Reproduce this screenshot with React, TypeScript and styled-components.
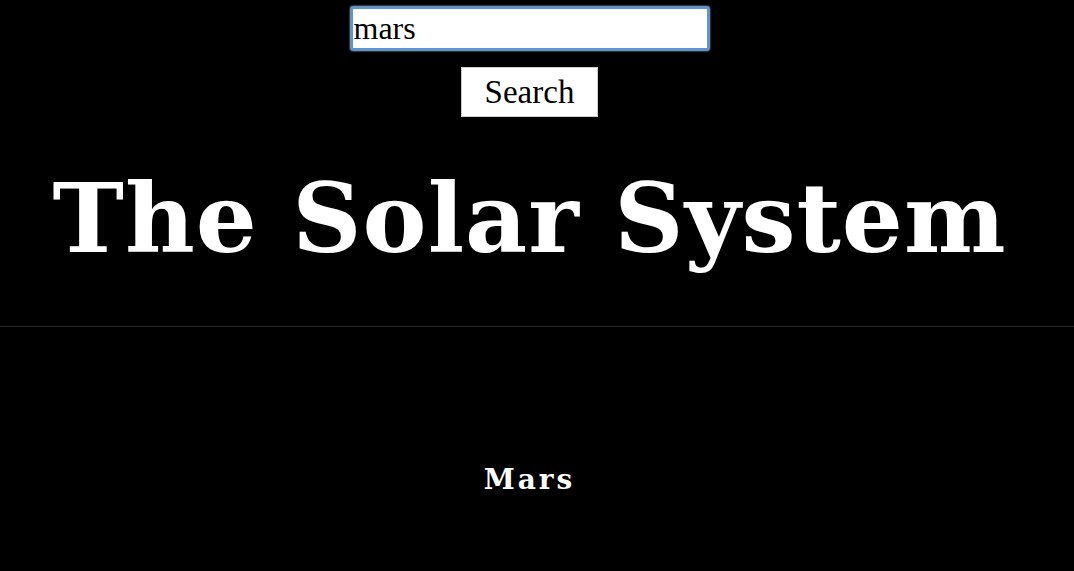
import React from "react";
import styled, { createGlobalStyle } from "styled-components";

const Global = createGlobalStyle`
  html, body { margin: 0; padding: 0; background: #000; }
  body { font-family: "Liberation Serif", serif; color: #fff; }
`;

const Page = styled.div`
  display: flex;
  flex-direction: column;
  align-items: stretch;
  min-height: 571px;
  padding-right: 15px;
  background: #000;
`;

const SearchForm = styled.form`
  display: flex;
  flex-direction: column;
  align-items: center;
  gap: 17px;
  padding-top: 7px;
`;

const SearchInput = styled.input`
  width: 358px;
  height: 43px;
  box-sizing: border-box;
  padding: 0 1px;
  font-family: "Liberation Serif", serif;
  font-size: 32px;
  color: #000;
  background: #fff;
  border: 2px solid #5b95d6;
  border-radius: 2px;
  box-shadow: 0 0 2px 1px #9cc3ec;
  outline: none;
  caret-color: #000;
`;

const SearchButton = styled.button`
  width: 137px;
  height: 50px;
  box-sizing: border-box;
  font-family: "Liberation Serif", serif;
  font-size: 33px;
  color: #000;
  background: #fff;
  border: 1px solid #ccc;
  border-radius: 0;
  padding: 0;
`;

const Title = styled.h1`
  margin: 22px 0 0;
  height: 187px;
  text-align: center;
  font-family: "DejaVu Serif", serif;
  font-weight: 900;
  font-size: 96px;
  line-height: 160px;
  letter-spacing: 1px;
  color: #fff;
`;

const Divider = styled.hr`
  margin: 0 -15px 0 0;
  border: 0;
  border-top: 1px solid #262626;
`;

const Result = styled.h2`
  margin: 136px 0 0;
  text-align: center;
  font-family: "DejaVu Serif", serif;
  font-weight: 900;
  font-size: 28px;
  letter-spacing: 3px;
  color: #fff;
`;

export default function App() {
  const [q, setQ] = React.useState("mars");
  const ref = React.useRef<HTMLInputElement>(null);
  React.useEffect(() => {
    ref.current?.focus();
  }, []);
  return (
    <Page>
      <Global />
      <SearchForm onSubmit={(e) => e.preventDefault()}>
        <SearchInput ref={ref} value={q} onChange={(e) => setQ(e.target.value)} />
        <SearchButton type="submit">Search</SearchButton>
      </SearchForm>
      <Title>The Solar System</Title>
      <Divider />
      <Result>Mars</Result>
    </Page>
  );
}
